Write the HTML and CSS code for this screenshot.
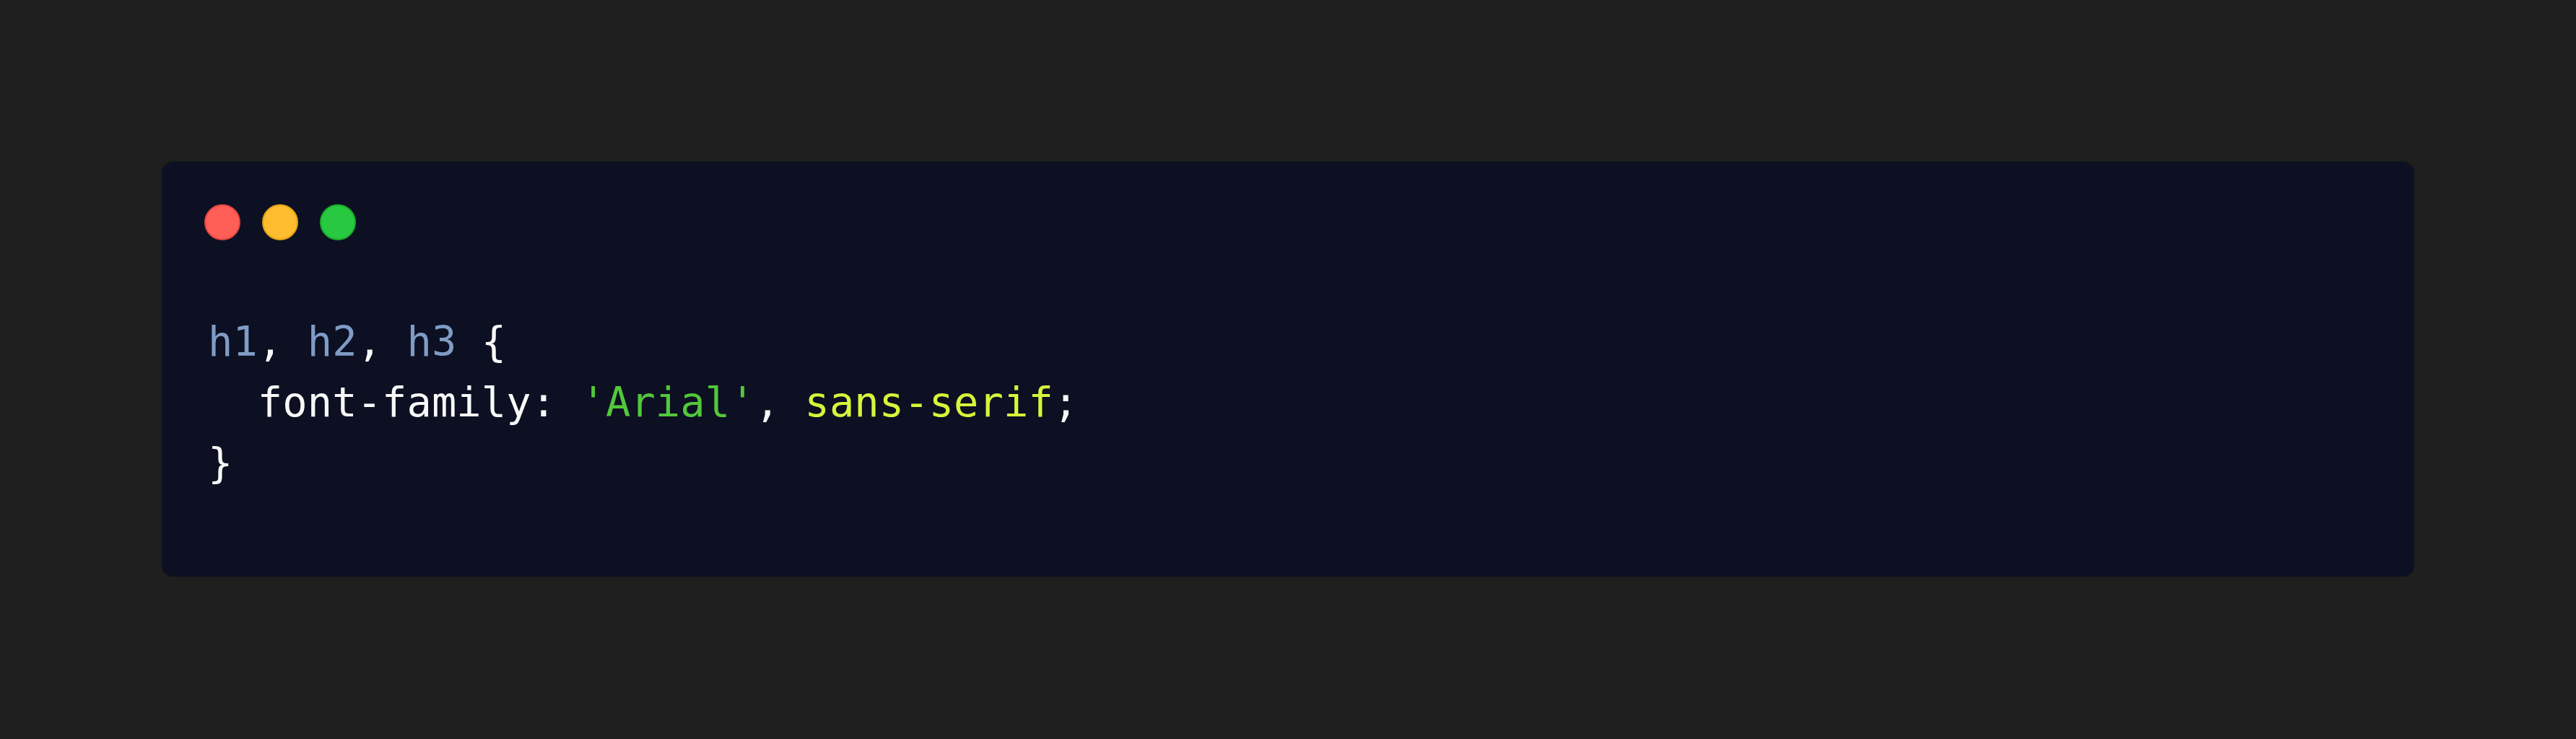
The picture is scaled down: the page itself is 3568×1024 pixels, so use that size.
FILE: index.html
```html
<!DOCTYPE html>
<html lang="en">
<head>
<meta charset="utf-8">
<title>Code</title>
<link rel="stylesheet" href="styles.css">
</head>
<body>
<div class="window">
  <div class="dots">
    <span class="dot red"></span>
    <span class="dot yellow"></span>
    <span class="dot green"></span>
  </div>
  <pre class="code"><span class="sel">h1</span>, <span class="sel">h2</span>, <span class="sel">h3</span> {
  font-family: <span class="str">'Arial'</span>, <span class="kw">sans-serif</span>;
}</pre>
</div>
</body>
</html>
```

FILE: styles.css
```css
html, body {
  margin: 0;
  padding: 0;
}
body {
  background: #1f1f1f;
  padding: 224px;
  min-height: 1024px;
  box-sizing: border-box;
}
.window {
  background: #0c1022;
  border-radius: 16px;
  padding: 59px 59px 116px 59px;
  box-shadow: 0 0 2px rgba(0,0,0,0.3);
}
.dots {
  display: flex;
  gap: 30px;
  height: 50px;
}
.dot {
  width: 50px;
  height: 50px;
  border-radius: 50%;
  box-sizing: border-box;
  border: 2px solid;
}
.red { background: #ff5f57; border-color: #e2463f; }
.yellow { background: #febc2e; border-color: #e1a116; }
.green { background: #28c840; border-color: #1aab29; }
.code {
  margin: 98px 0 0 5px;
  font-family: "DejaVu Sans Mono", "Liberation Mono", monospace;
  font-size: 57px;
  letter-spacing: 0.12px;
  line-height: 84px;
  color: #f8f8f8;
  white-space: pre;
}
.sel { color: #7f9cc6; }
.str { color: #52c83a; }
.kw { color: #d7f53a; }
```
